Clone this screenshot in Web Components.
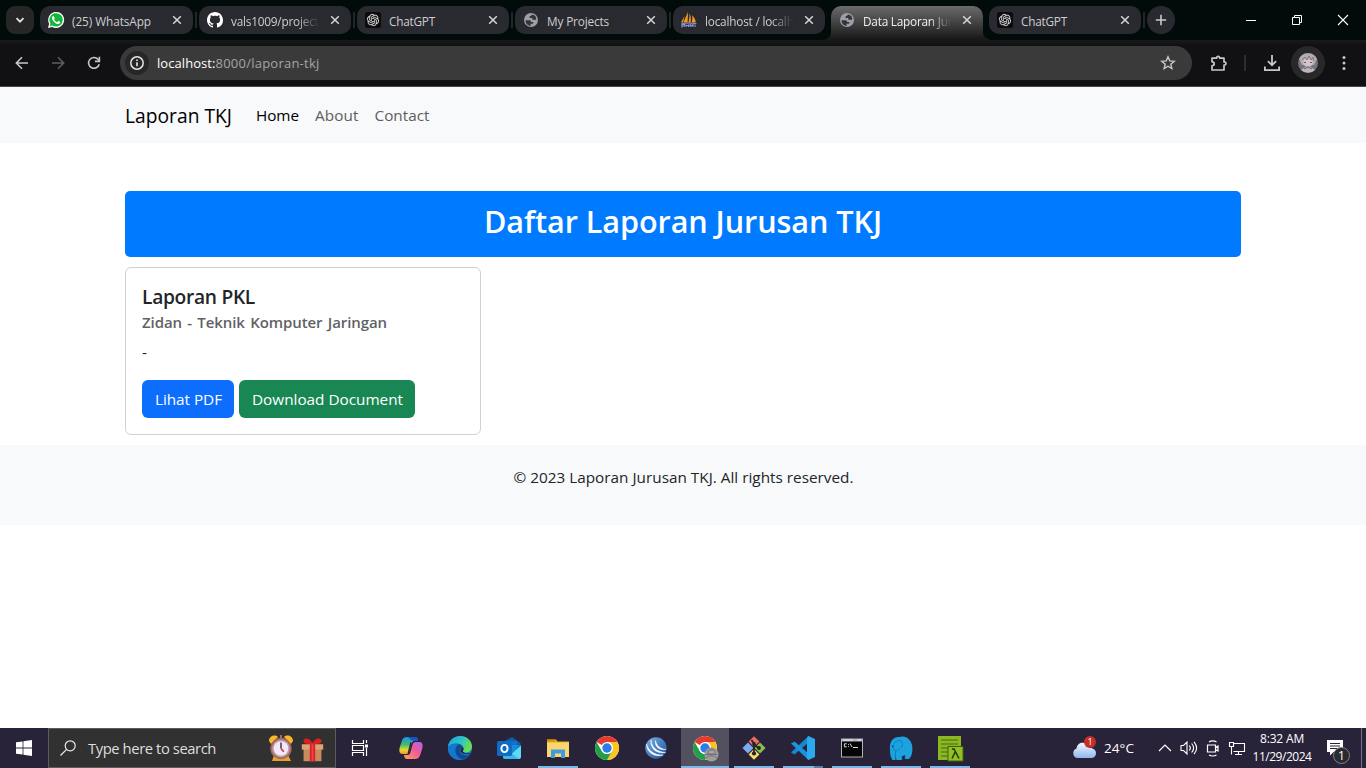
<!DOCTYPE html>
<html lang="id">
<head>
<meta charset="utf-8">
<title>Data Laporan Jurusan TKJ</title>
<style>
html,body{margin:0;height:100%}
body{font-family:"Open Sans","Noto Sans",sans-serif;background:#fff;overflow:hidden}
</style>
</head>
<body>
<desktop-screen></desktop-screen>
<script>
const define = (name, html, setup) => {
  const tpl = document.createElement('template');
  tpl.innerHTML = html;
  customElements.define(name, class extends HTMLElement {
    connectedCallback() {
      if (this.shadowRoot) return;
      this.attachShadow({mode: 'open'}).appendChild(tpl.content.cloneNode(true));
      if (setup) setup(this, this.shadowRoot);
    }
  });
};

const chromeArt = `<circle cx="12" cy="12" r="12" fill="#fff"/><path d="M12 12 1.6 6A12 12 0 0 1 22.4 6H12z" fill="#e33b2e"/><path d="M22.4 6A12 12 0 0 1 12 24l5.2-9A6 6 0 0 0 12 6z" fill="#fcc41f"/><path d="M1.6 6A12 12 0 0 0 12 24l5.2-9A6 6 0 0 1 6.8 15z" fill="#23a047"/><circle cx="12" cy="12" r="5.9" fill="#fff"/><circle cx="12" cy="12" r="4.7" fill="#2d7de9"/>`;
const ICONS = {
  down: [10, `<path d="M1.5 3.2 5 6.7 8.500 3.200" fill="none" stroke="#e3e3e3" stroke-width="1.8"/>`],
  close: [10, `<path d="m1.200 1.200 7.600 7.600M8.800 1.200 1.200 8.800" stroke="#d6d6d6" stroke-width="1.5"/>`],
  plus: [12, `<path d="M6 .8v10.400M.8 6h10.400" stroke="#c9c9c9" stroke-width="1.6"/>`],
  whatsapp: [16, `<path d="M0 16l1.150-4.200A8 8 0 1 1 4.200 14.900z" fill="#fff"/><path d="M1.700 14.300l.75-2.700A6.700 6.700 0 1 1 4.500 13.600z" fill="#12b83c"/><path d="M5.700 4.200c-.5-.5-1.800.4-1.800 1.700 0 2.100 3.500 6.100 6.300 6.100 1.200 0 2.100-.8 2-1.900-.5-.5-1.400-.9-2-1l-1 1.100C7.800 9.800 6.500 8.500 6 7.300l.7-.9C6.500 5.600 6.200 4.800 5.700 4.200z" fill="#fff"/>`],
  github: [16, `<path fill="#fff" d="M8 0C3.580 0 0 3.580 0 8c0 3.540 2.290 6.530 5.470 7.590.4.070.55-.17.55-.38 0-.19-.01-.82-.01-1.490-2.010.37-2.530-.49-2.690-.94-.09-.23-.48-.94-.82-1.130-.28-.15-.68-.52-.01-.53.63-.01 1.080.58 1.230.82.72 1.210 1.870.87 2.330.66.070-.52.28-.87.51-1.070-1.780-.2-3.640-.89-3.640-3.950 0-.87.31-1.590.82-2.150-.08-.2-.36-1.020.08-2.120 0 0 .67-.21 2.200.82.64-.18 1.320-.27 2-.27s1.360.09 2 .27c1.530-1.040 2.200-.82 2.200-.82.44 1.100.16 1.920.08 2.120.51.56.82 1.270.82 2.150 0 3.070-1.870 3.750-3.650 3.950.29.25.54.73.54 1.480 0 1.070-.01 1.930-.01 2.200 0 .21.15.46.55.38A8.010 8.010 0 0 0 16 8c0-4.420-3.580-8-8-8z"/>`],
  openai: [16, `<rect width="16" height="16" rx="2.500" fill="#0b0b0d"/><path transform="translate(1.900 1.900) scale(.508)" fill="#dedede" stroke="#dedede" stroke-width=".3" d="M22.2819 9.8211a5.9847 5.9847 0 0 0-.5157-4.9108 6.0462 6.0462 0 0 0-6.5098-2.9A6.0651 6.0651 0 0 0 4.9807 4.1818a5.9847 5.9847 0 0 0-3.9977 2.9 6.0462 6.0462 0 0 0 .7427 7.0966 5.98 5.98 0 0 0 .511 4.9107 6.051 6.051 0 0 0 6.5146 2.9001A5.9847 5.9847 0 0 0 13.2599 24a6.0557 6.0557 0 0 0 5.7718-4.2058 5.9894 5.9894 0 0 0 3.9977-2.9001 6.0557 6.0557 0 0 0-.7475-7.0729zm-9.022 12.6081a4.4755 4.4755 0 0 1-2.8764-1.0408l.1419-.0804 4.7783-2.7582a.7948.7948 0 0 0 .3927-.6813v-6.7369l2.02 1.1686a.071.071 0 0 1 .038.052v5.5826a4.504 4.504 0 0 1-4.4945 4.4944zm-9.6607-4.1254a4.4708 4.4708 0 0 1-.5346-3.0137l.142.0852 4.783 2.7582a.7712.7712 0 0 0 .7806 0l5.8428-3.3685v2.3324a.0804.0804 0 0 1-.0332.0615L9.74 19.9502a4.4992 4.4992 0 0 1-6.1408-1.6464zM2.3408 7.8956a4.485 4.485 0 0 1 2.3655-1.9728V11.6a.7664.7664 0 0 0 .3879.6765l5.8144 3.3543-2.0201 1.1685a.0757.0757 0 0 1-.071 0l-4.8303-2.7865A4.504 4.504 0 0 1 2.3408 7.872zm16.5963 3.8558L13.1038 8.364 15.1192 7.2a.0757.0757 0 0 1 .071 0l4.8303 2.7913a4.4944 4.4944 0 0 1-.6765 8.1042v-5.6772a.79.79 0 0 0-.407-.667zm2.0107-3.0231l-.142-.0852-4.7735-2.7818a.7759.7759 0 0 0-.7854 0L9.409 9.2297V6.8974a.0662.0662 0 0 1 .0284-.0615l4.8303-2.7866a4.4992 4.4992 0 0 1 6.6802 4.66zM8.3065 12.863l-2.02-1.1638a.0804.0804 0 0 1-.038-.0567V6.0742a4.4992 4.4992 0 0 1 7.3757-3.4537l-.142.0805L8.704 5.459a.7948.7948 0 0 0-.3927.6813zm1.0976-2.3654l2.602-1.4998 2.6069 1.4998v2.9994l-2.5974 1.4997-2.6067-1.4997Z"/>`],
  globe: [16, `<circle cx="8" cy="8" r="7" fill="#9ba0a6"/><path d="M2.600 8.200h3.600c1.600 0 1.900 1 1.900 1.900H10.200v1.700H7.700v1.900C4.800 13.800 2.300 11.400 2.600 8.200zM8.800 2.500c-.2 1.300-1 1.500-2.200 1.700v1.700h2.700v1.900h3.800c.6-3-1.600-5.100-4.300-5.300z" fill="#33353b"/>`],
  sails: [16, `<path d="M7 0 2.400 10.500H6.600zM3.500 4 0 10.500h2zM8.500 1.200C10 4 10.200 8 9.600 10.500H7.400C8.400 7 8.700 4 8.500 1.200zM11 3.200c2.500 2 3.600 5 3.800 7.300H10.700c.9-3 .8-5 .3-7.300z" fill="#f49a1f"/><path d="M.5 11.800c5-1 10-1 15 0M1 15.500v-3h2.500v1.500H1M5 15v-2.600M5 13.500h2.500M7.500 15v-2.600M9 15v-2.600l1.500 1.500 1.500-1.500V15M14 15v-2.600" stroke="#8e95d6" stroke-width="1.100" fill="none"/>`],
  back: [16, `<path d="M8 2.200 2.300 8 8 13.800M2.600 8H14" fill="none" stroke="#c7c7c7" stroke-width="1.600"/>`],
  forward: [16, `<path d="M8 2.200 13.700 8 8 13.800M13.400 8H2" fill="none" stroke="#5d5d5d" stroke-width="1.600"/>`],
  reload: [16, `<path d="M13.200 9.200A5.400 5.400 0 1 1 12 4.300L13.500 6" fill="none" stroke="#c7c7c7" stroke-width="1.600"/><path d="M13.400 1.800V6.400H8.900" fill="none" stroke="#c7c7c7" stroke-width="1.600"/>`],
  info: [16, `<circle cx="8" cy="8" r="6.200" fill="none" stroke="#e6e6e6" stroke-width="1.500"/><path d="M8 7.200v4M8 4.600v1.500" stroke="#e6e6e6" stroke-width="1.600"/>`],
  star: [16, `<path d="m8 1.700 1.750 4.150 4.500.38-3.420 2.950 1.030 4.390L8 11.240l-3.860 2.330 1.030-4.390L1.750 6.230l4.500-.38z" fill="none" stroke="#c7c7c7" stroke-width="1.400"/>`],
  puzzle: [18, `<path d="M2 4.200h4.600c-.2-2.500 3.300-2.500 3.100 0H14v3.700c2.600-.2 2.600 3.400 0 3.200V16H2v-4.200c3-.2 3-3.800 0-4z" fill="none" stroke="#c7c7c7" stroke-width="1.700" stroke-linejoin="round"/>`],
  download: [18, `<path d="M9 1v9.800M4.900 7.100 9 11.200l4.100-4.100M1.900 12.500v3.600h14.200v-3.600" fill="none" stroke="#c7c7c7" stroke-width="1.800"/>`],
  more: [16, `<circle cx="8" cy="2.600" r="1.500" fill="#c7c7c7"/><circle cx="8" cy="8" r="1.500" fill="#c7c7c7"/><circle cx="8" cy="13.400" r="1.500" fill="#c7c7c7"/>`],
  avatar: [20, `<circle cx="10" cy="10" r="10" fill="#77727d"/><path d="M1 6a10 10 0 0 1 18 0l-3 6H4z" fill="#b3abb2"/><ellipse cx="10" cy="9.500" rx="4.800" ry="4.200" fill="#d3c4c7"/><path d="M4 7l3-3 2 3 2-4 2 4 2-3 1 4" fill="none" stroke="#81757f"/><path d="M6 9.500h2M12 9.500h2" stroke="#69545f"/><path d="M3 17l5-3.500 2 1 2-1 5 3.500a10 10 0 0 1-14 0z" fill="#bcb6c0"/><path d="m6 16 4-2 4 2" stroke="#68616b" fill="none"/>`],
  min: [10, `<path d="M0 5.500h10" stroke="#fff"/>`],
  restore: [10, `<path d="M.5 2.500h7v7h-7zM2.500 2.500v-2h7v7h-2" fill="none" stroke="#fff"/>`],
  quit: [10, `<path d="m0 0 10 10M10 0 0 10" stroke="#fff" stroke-width="1.100"/>`],
  windows: [16, `<path d="M0 2.300 6.600 1.400V7.600H0zM7.400 1.300 16 0v7.600H7.400zM0 8.400h6.600v6.200L0 13.700zM7.400 8.400H16V16l-8.600-1.300z" fill="#fff"/>`],
  search: [16, `<circle cx="10.200" cy="5.800" r="5" fill="none" stroke="#e8e8e8" stroke-width="1.200"/><path d="M6.600 9.400.5 15.500" stroke="#e8e8e8" stroke-width="1.300"/>`],
  clock: [28, `<path d="m7 21-2 6h19l-3-6z" fill="#e8a12a"/><path d="M2 7c0-5 6-7 9-4L4 10zM26 7c0-5-6-7-9-4l7 7z" fill="#fbb725"/><path d="M13 1h2v4h-2z" fill="#99706e"/><circle cx="14" cy="14.500" r="10.700" fill="#9c6869"/><circle cx="14" cy="14.500" r="9" fill="#c79a99"/><circle cx="14" cy="14.500" r="7.300" fill="#eeeafa"/><path d="M14 8.500v6" stroke="#3f3558" stroke-width="1.500"/><path d="m14 14.500 2.800 3.300" stroke="#e62d3f" stroke-width="1.700"/>`],
  gift: [28, `<path d="M4 11h20v15H4z" fill="#c98a5c"/><path d="M2 7h24v6H2z" fill="#dca377"/><path d="M14 6C10-2 3 0 4 4c0 3 6 3 10 2zM14 6c4-8 11-6 10-2 0 3-6 3-10 2z" fill="#e51c1f"/><path d="M11 5h6v21h-6z" fill="#d92228"/><path d="M13 7h2v19h-2z" fill="#f14245"/>`],
  taskview: [18, `<path d="M1.500 1v3.500h11V1M1.500 17v-3.500h11V17M1.500 6.500h11v5h-11zM15.500 1v3M15.500 9v8" fill="none" stroke="#fff" stroke-width="1.200"/><path d="M14 5.500h3v3h-3z" fill="#fff"/>`],
  copilot: [24, `<defs><linearGradient id="a" x1="0" y1="0" x2="0" y2="1"><stop stop-color="#1e8fea"/><stop offset=".45" stop-color="#43bb6e"/><stop offset=".75" stop-color="#e5d632"/><stop offset="1" stop-color="#f49a2b"/></linearGradient><linearGradient id="b" x1="1" y1="0" x2="0" y2="1"><stop stop-color="#ad65f2"/><stop offset=".45" stop-color="#ef5b9a"/><stop offset="1" stop-color="#ffa14b"/></linearGradient></defs><path d="M8 1h8c2 0 2.500 1.500 3 4h-3.500c-2 0-2.500 1-3 3l-2 7c-.6 2-1 3-3.500 3H3.500C-.2 18 0 14 1 10.500l2-6C3.800 2 5.500 1 8 1z" fill="url(#a)"/><path d="M9 1h7c2 0 2.500 1.500 3 4h-4L12 4z" fill="#1555c9"/><path d="M16 23H8c-2 0-2.500-1.500-3-4h3.500c2 0 2.500-1 3-3l2-7c.6-2 1-3 3.500-3h3.500c3.700 0 3.500 4 2.500 7.500l-2 6c-.8 2.500-2.500 3.500-5 3.500z" fill="url(#b)"/><path d="M12 6.500 9.300 17.500" stroke="#282338" stroke-width="1.500"/>`],
  edge: [24, `<defs><linearGradient id="c" x1="0" y1="0" x2="1" y2=".4"><stop stop-color="#1aa3dd"/><stop offset=".6" stop-color="#2fc6c2"/><stop offset="1" stop-color="#68e04e"/></linearGradient></defs><circle cx="12" cy="12" r="12" fill="#1479cc"/><path d="M0 11C.5 5 5.500 0 12 0c7 0 12 5 12 10.500 0 4-3 6-6.500 6-2.500 0-3.500-1-2.500-2 2-3-.5-7-5.500-7C5 7.500 1 9 0 11z" fill="url(#c)"/><path d="M9.500 7.700C5 10 4 20 12 24 5 24-1 18 0 11.500 1.500 8.500 6 7 9.500 7.700z" fill="#1377cb"/><path d="M10 8.500c-4 3-4 12 3.500 14.500 3 .5 7-2 9-5-4 2.500-10 1.500-10.500-3-.2-3 2.500-3 1.500-5-.7-1.300-2-1.700-3.500-1.500z" fill="#114a91"/><path d="M13 10.500c2 2-2 3.500 0 5.500 2 2.500 7 2.500 9.500 1.500l-1 2c2-2 1-2.500.5-2.500-3 1-7.500 0-7-2.500 1-1 1-3-2-4z" fill="#282338"/>`],
  outlook: [24, `<path d="m6 6 9-5 8.500 6v14c0 1.500-1 2-2 2H8c-1.500 0-2-1-2-2z" fill="#0f5ca8"/><path d="M8 5h12v10H8z" fill="#1672c9"/><path d="M14 9h9l-9 9z" fill="#178bdd"/><path d="m6 13 9 4.500L24 9v12c0 1.500-1 2-2 2H8c-1.500 0-2-1-2-2z" fill="#36b9ee"/><path d="M15 17.500 24 10v11l-2 2z" fill="#60d9f7"/><rect y="5" width="15" height="15" rx="1.500" fill="#0f6cc2"/><ellipse cx="7.500" cy="12.500" rx="3.100" ry="3.600" fill="none" stroke="#fff" stroke-width="1.900"/>`],
  folder: [24, `<path d="M1 3.500h9l1.500 2H23V21H1z" fill="#e8a91b"/><path d="M1 6.500h22V21H1z" fill="#fbd66e"/><path d="M1 3.500h8v2H1z" fill="#d78e0a"/><path d="M5 13.500h14V22h-4v-4.500H9V22H5z" fill="#3d9be0"/>`],
  chrome: [24, chromeArt],
  rapid: [24, `<defs><linearGradient id="r" x2="1" y2="1"><stop stop-color="#79b6e8"/><stop offset="1" stop-color="#174c99"/></linearGradient></defs><circle cx="12" cy="12" r="10.700" fill="url(#r)"/><path d="M7 4c.5 7 6 12 14.500 12.500C12 18.500 6 12 7 4zM11.500 4.500c1 5 4.500 8.500 10.500 9-7 1-11.500-3-10.500-9zM2.500 8c2 7 8.500 11.500 16.500 11C10 21.500 3 16.500 2.500 8z" fill="#fff" stroke="#fff" stroke-width=".5"/>`],
  chrome2: [24, chromeArt + `<circle cx="18.500" cy="18.500" r="7" fill="#a09c9f"/><path d="M14 15c2-4 7-4 9 0v3h-9z" fill="#8a8689"/><path d="M13 22c3-3 8-3 11 0M12.500 18.500h12" fill="none" stroke="#6f6a71" stroke-width=".9"/><path d="M16 16h5" stroke="#cbc5c8"/>`],
  git: [24, `<path d="m12 .3 5.400 5.200L12 11 6.600 5.500z" fill="#ef6b61"/><path d="m6 6.500 5.400 5.500L6 17.500.4 12z" fill="#79adf2"/><path d="m18 6.500 5.600 5.500-5.600 5.500-5.400-5.500z" fill="#8dbf4c"/><path d="m12 13 5.400 5.500-5.400 5.200-5.400-5.200z" fill="#f6da6b"/><path d="M9.500 4 12 7.500V18M12 8.500l4.500 3.500" stroke="#252321" stroke-width="1.700" fill="none"/><circle cx="12" cy="8" r="1.900" fill="#252321"/><circle cx="17" cy="12" r="1.900" fill="#252321"/><circle cx="12" cy="17.500" r="2.100" fill="#252321"/>`],
  code: [24, `<path d="M17.500 0v6.500L3.500 18.500 0 16.500z" fill="#1687d1"/><path d="M17.500 24v-6.500L3.500 5.500 0 7.500z" fill="#1c93dc"/><path d="M17.500 0 16 1.500V22.500L17.500 24l6.500-3V3z" fill="#2aa9f1"/>`],
  cmd: [24, `<path d="M1 2.500h22v19H1z" fill="#aeb4b7"/><path d="M2 5.500h20V20.500H2z" fill="#050505"/><path d="M17 4h4M3 4h10" stroke="#eef"/><path d="M6.800 7.800H4.400v3h2.400M8.500 8v.9M8.500 10v.9M10 7.500l2 3.500M13 11.500h5" stroke="#ddd" fill="none"/>`],
  elephant: [24, `<path d="M1 14C0 6 4 0 11 1c6-2 11 3 12 8 1 6 0 11-3 14h-4v-4c-1 .8-2 1-3 1v4H7.500l-1-4v4H3.500C1.500 21 1 18 1 14z" fill="#1da2e0"/><path d="M9.500 4.500C4.500 6 3 11 5 14c2.500 2 5 0 6-2.500M10 4.500c3 0 4.500 3 2.500 7" fill="none" stroke="#0b7bb8" stroke-width=".9"/><path d="M6.500 15.500v8M13 20v4M16 19v4" stroke="#0b6b9f" stroke-width=".7"/><circle cx="3.600" cy="10.500" r=".7" fill="#053958"/>`],
  lambda: [25, `<path d="M0 0h23v24H0z" fill="#8bb722"/><path d="M3 4h17M3 8h17M3 12h7M3 16h7M3 20h7" stroke="#4a6b13" stroke-width="1.100"/><path d="M10 10.500h15V25H10z" fill="#91c11e" stroke="#425e15"/><path d="M14 13h2l5 9.500M17.200 16 14 22.500" stroke="#25320b" stroke-width="1.500" fill="none"/>`],
  cloud: [24, `<defs><linearGradient id="w" x2="0" y2="1"><stop stop-color="#f5f9ff"/><stop offset="1" stop-color="#8fb6ef"/></linearGradient></defs><path d="M5 22a5 5 0 0 1-.5-9.500C5 8 9 6 12.500 7c2.500.7 4 2.500 4.500 5 4-.5 7 2 7 5s-2 5-5 5z" fill="url(#w)"/>`],
  chevup: [14, `<path d="m1 10 6-6 6 6" fill="none" stroke="#fff" stroke-width="1.200"/>`],
  speaker: [18, `<path d="M1 6.500h2.500L7 3v12l-3.500-3.500H1zM9.300 6.500c1.300 1.500 1.300 3.500 0 5M11.600 4.500c2.400 2.700 2.400 6.300 0 9M14 2.800c3.200 3.800 3.200 8.600 0 12.400" fill="none" stroke="#fff" stroke-width="1.100"/>`],
  meet: [16, `<path d="M2.500 5h8v7h-8zM10.500 7.500l2.500-1.500v5l-2.500-1.500M4 2c2-1.400 5.500-1.400 7.500 0M4 15c2 1.300 5.500 1.300 7.500 0" fill="none" stroke="#fff" stroke-width="1.200"/>`],
  network: [18, `<path d="M5.500 4.500h11v8h-11M10.500 12.500v3M7 15.500h7M1.500 3.500h4v4h-4zM3.500 7.500v8" fill="none" stroke="#fff" stroke-width="1.100"/>`],
  note: [18, `<path d="M1 1h16v12H7.500L4 16.500V13H1z" fill="#fff"/><path d="M4 4.500h10M4 7h10M4 9.500h7" stroke="#282338" stroke-width="1.100"/>`]
};

define('app-icon', `<style>:host{display:block;flex:none}svg{display:block;overflow:visible}</style><span></span>`, (el, root) => {
  const [box, art] = ICONS[el.getAttribute('name')];
  const size = el.getAttribute('size') || box;
  root.querySelector('span').innerHTML = `<svg width="${size}" height="${size}" viewBox="0 0 ${box} ${box}" aria-hidden="true">${art}</svg>`;
});

// Text run that spreads its letters over the width given in "w".
define('fit-text', `<style>:host{display:inline-block;white-space:nowrap;flex:none}span{display:inline-block}</style><span><slot></slot></span>`, (el, root) => {
  const span = root.querySelector('span'), w = +el.getAttribute('w');
  const n = el.textContent.length;
  if (!w) return;
  span.style.letterSpacing = '0px';
  const gap = (w - span.getBoundingClientRect().width) / n;
  span.style.letterSpacing = gap.toFixed(3) + 'px';
  el.style.width = w + 'px';
});

define('browser-tab', `<style>
:host{display:flex;align-items:center;width:152px;height:28px;flex:none;box-sizing:border-box;border-radius:10px;background:#292a2f;color:#cdced1;font-size:11.800px;padding:0 11px 0 8px;position:relative}
:host([first]){width:153px}
:host([active]){height:34px;align-self:flex-start;background:linear-gradient(#6b6b6b,#171717);border-radius:10px 10px 0 0;color:#f0f0f0;padding-bottom:6px}
:host([active])::before,:host([active])::after{content:"";position:absolute;bottom:0;width:8px;height:8px;background:radial-gradient(circle at 0 0,transparent 7.5px,#1a1a1a 8px)}
:host([active])::before{left:-8px}
:host([active])::after{right:-8px;transform:scaleX(-1)}
.t{flex:1;overflow:hidden;margin:0 10px 0 8px;padding-top:1px;line-height:18px}
:host([cut]) .t{-webkit-mask-image:linear-gradient(90deg,#000 66px,transparent 88px)}
</style><div class="t"><slot></slot></div><app-icon name="close"></app-icon>`, (el, root) => {
  const icon = document.createElement('app-icon');
  icon.setAttribute('name', el.getAttribute('icon'));
  root.querySelector('.t').before(icon);
});

define('tab-sep', `<style>:host{display:block;width:2px;height:16px;margin:0 2px;background:#232626;flex:none}:host([off]){background:none}</style>`);

define('browser-window', `<style>
:host{display:block;background:#010b09}
.strip{display:flex;height:40px;align-items:flex-start;padding:6px 0 0 6px;box-sizing:border-box}
.strip tab-sep{margin-top:6px}
.menu{width:28px;height:28px;border-radius:9px;background:#262626;display:flex;align-items:center;justify-content:center;margin-right:6px}
.add{width:28px;height:28px;border-radius:50%;background:#292a2f;display:flex;align-items:center;justify-content:center}
.win{display:flex;gap:36px;margin:9px 18px 0 auto}
.bar{display:flex;height:47px;box-sizing:border-box;align-items:center;background:linear-gradient(#1a1a1a,#111113 5px);border-bottom:1px solid #4a454b;padding:0 14px}
.bar>app-icon{margin-right:20px}
.url{flex:none;width:1072px;height:34px;border-radius:17px;background:#3a3a3a;display:flex;align-items:center;box-sizing:border-box;padding:0 16px 0 5px;margin-left:-2px;margin-right:18px;color:#a5a5a5;font-size:13px}
.url i{width:24px;height:24px;border-radius:50%;background:#272727;display:flex;align-items:center;justify-content:center;margin-right:8px}
.host{color:#fff}.url .star{margin-left:auto}
.bar .x{margin:0}
.div{width:2px;height:16px;background:#2c2c33;margin:0 17px 0 16px}
.me{width:34px;height:34px;border-radius:50%;background:#282828;display:flex;align-items:center;justify-content:center;margin:0 11px 0 10px}
</style>
<div class="strip"><div class="menu"><app-icon name="down"></app-icon></div>
<browser-tab first icon="whatsapp"><fit-text w="79">(25) WhatsApp</fit-text></browser-tab><tab-sep></tab-sep>
<browser-tab cut icon="github"><fit-text w="93">vals1009/projects</fit-text></browser-tab><tab-sep></tab-sep>
<browser-tab icon="openai"><fit-text w="46">ChatGPT</fit-text></browser-tab><tab-sep></tab-sep>
<browser-tab icon="globe"><fit-text w="62">My Projects</fit-text></browser-tab><tab-sep></tab-sep>
<browser-tab cut icon="sails"><fit-text w="105">localhost / localhost</fit-text></browser-tab><tab-sep off></tab-sep>
<browser-tab active cut icon="globe"><fit-text w="115">Data Laporan Jurusan</fit-text></browser-tab><tab-sep off></tab-sep>
<browser-tab icon="openai"><fit-text w="46">ChatGPT</fit-text></browser-tab><tab-sep></tab-sep>
<div class="add"><app-icon name="plus"></app-icon></div>
<div class="win"><app-icon name="min"></app-icon><app-icon name="restore"></app-icon><app-icon name="quit"></app-icon></div></div>
<div class="bar"><app-icon name="back"></app-icon><app-icon name="forward"></app-icon><app-icon name="reload"></app-icon>
<div class="url"><i><app-icon name="info"></app-icon></i><fit-text class="host" w="58.5">localhost:</fit-text><fit-text w="104">8000/laporan-tkj</fit-text><app-icon class="star" name="star"></app-icon></div>
<app-icon class="x" name="puzzle"></app-icon><div class="div"></div><app-icon class="x" name="download"></app-icon><div class="me"><app-icon name="avatar"></app-icon></div><app-icon class="x" name="more"></app-icon></div>`);

define('site-nav', `<style>
:host{display:flex;align-items:center;height:56px;background:#f8f9fa;padding:0 125px;box-sizing:border-box;font-size:15.300px;color:#5d5e5f}
.brand{font-size:19.200px;color:#000;margin-right:24px}nav{display:flex;gap:16px}.on{color:#000}
</style><fit-text class="brand" w="107">Laporan TKJ</fit-text><nav><fit-text class="on" w="43">Home</fit-text><fit-text w="43.5">About</fit-text><fit-text w="55">Contact</fit-text></nav>`);

define('ui-button', `<style>:host{display:flex;align-items:center;height:38px;box-sizing:border-box;padding:0 12px 0 13px;border-radius:6px;background:#0d6efd;color:#fff;font-size:15.300px}:host([kind=success]){background:#198754}</style><slot></slot>`);

define('report-card', `<style>
:host{display:block;width:356px;height:168px;box-sizing:border-box;border:1px solid #d0d1d2;border-radius:6px;padding:16px;background:#fff;color:#212529;font-size:15.300px}
.title{font-size:19.200px;font-weight:600;line-height:26px;height:24px;margin-bottom:4px}
.sub{font-weight:600;color:#5f6265;font-size:15px;word-spacing:1.500px;line-height:20px;height:19px;margin-bottom:8px}
p{margin:0 0 16px;line-height:26px;height:25px}
.row{display:flex;gap:5px}
</style><div class="title"><slot name="title"></slot></div><div class="sub"><slot name="author"></slot></div><p><slot></slot></p><div class="row"><slot name="actions"></slot></div>`);

define('site-page', `<style>
:host{display:block;flex:1;background:#fff}
main{padding:48px 125px 10px}
h1{margin:0 0 10px;height:66px;box-sizing:border-box;padding-top:9px;border-radius:5px;background:#007bff;color:#fff;text-align:center;font-size:30.600px;line-height:42px;font-weight:600}
footer{height:80px;box-sizing:border-box;background:#f8f9fa;text-align:center;padding-top:20px;padding-left:1px;font-size:15.300px;line-height:24px;color:#212529}
.acts{display:flex;gap:5px}
</style><site-nav></site-nav><main><h1><fit-text w="398">Daftar Laporan Jurusan TKJ</fit-text></h1>
<report-card><fit-text slot="title" w="113">Laporan PKL</fit-text><fit-text slot="author" w="245">Zidan - Teknik Komputer Jaringan</fit-text>-<div class="acts" slot="actions"><ui-button><fit-text w="67">Lihat PDF</fit-text></ui-button><ui-button kind="success"><fit-text w="151">Download Document</fit-text></ui-button></div></report-card></main>
<footer><fit-text w="340">© 2023 Laporan Jurusan TKJ. All rights reserved.</fit-text></footer>`);

define('task-button', `<style>
:host{display:flex;align-items:center;justify-content:center;width:48px;height:40px;flex:none;position:relative}
i{display:none;position:absolute;bottom:0;left:4px;right:4px;height:2px;background:#76b9ed}
:host([open]) i{display:block}
:host([stack]) i{background:linear-gradient(90deg,#76b9ed 31px,#55809f 31px)}
:host([active]){background:#53505f}:host([active]) i{left:0;right:0}
</style><slot></slot><i></i>`);

define('task-bar', `<style>
:host{display:flex;height:40px;background:#282338;color:#fff}
.find{width:288px;height:40px;box-sizing:border-box;border:1px solid #5c5a5e;background:#313131;display:flex;align-items:center;padding:0 11px 0 11px;font-size:14.800px;color:#dedede}
.find fit-text{margin-left:12px;margin-right:auto}
.apps{display:flex;gap:1px;margin-left:3px}
.tray{display:flex;align-items:center;margin-left:auto;padding-right:4px;font-size:12px;width:294px;box-sizing:border-box}
.wx{position:relative}.badge{position:absolute;top:0;left:12px;width:12px;height:12px;border-radius:50%;background:#c62f25;font-size:9px;line-height:12px;text-align:center}
.deg{font-size:13.500px;margin:0 24px 0 8px}
.time{width:60px;margin-left:6px;text-align:center;line-height:18px;padding-bottom:1px}
.note{position:relative;margin-left:14px}
.n{position:absolute;left:7px;top:8px;width:17px;height:17px;box-sizing:border-box;border:1px solid #83818a;border-radius:50%;background:#2b2b2f;font-size:12px;line-height:15px;text-align:center}
.edge{width:1px;height:40px;background:#77738a;margin-left:auto}
</style><task-button><app-icon name="windows"></app-icon></task-button>
<div class="find"><app-icon name="search"></app-icon><fit-text w="128">Type here to search</fit-text><app-icon name="clock"></app-icon><app-icon name="gift" style="margin:4px -1px 0 5px" size="25"></app-icon></div>
<task-button><app-icon name="taskview"></app-icon></task-button>
<div class="apps">
<task-button><app-icon name="copilot"></app-icon></task-button><task-button><app-icon name="edge"></app-icon></task-button><task-button><app-icon name="outlook"></app-icon></task-button><task-button open><app-icon name="folder"></app-icon></task-button><task-button><app-icon name="chrome"></app-icon></task-button><task-button><app-icon name="rapid"></app-icon></task-button><task-button open active><app-icon name="chrome2"></app-icon></task-button><task-button open><app-icon name="git"></app-icon></task-button><task-button open stack><app-icon name="code"></app-icon></task-button><task-button open><app-icon name="cmd"></app-icon></task-button><task-button open><app-icon name="elephant"></app-icon></task-button><task-button open><app-icon name="lambda"></app-icon></task-button></div>
<div class="tray"><div class="wx"><app-icon name="cloud"></app-icon><span class="badge">1</span></div><fit-text class="deg" w="30">24°C</fit-text><app-icon name="chevup"></app-icon><app-icon name="speaker" style="margin-left:8px"></app-icon><app-icon name="meet" style="margin-left:7px"></app-icon><app-icon name="network" style="margin-left:7px"></app-icon>
<div class="time"><fit-text w="44">8:32 AM</fit-text><br><fit-text w="59">11/29/2024</fit-text></div><div class="note"><app-icon name="note"></app-icon><span class="n">1</span></div><div class="edge"></div></div>`);

define('desktop-screen', `<style>:host{display:flex;flex-direction:column;width:1366px;height:768px}</style><browser-window></browser-window><site-page></site-page><task-bar></task-bar>`);
</script>
</body>
</html>
